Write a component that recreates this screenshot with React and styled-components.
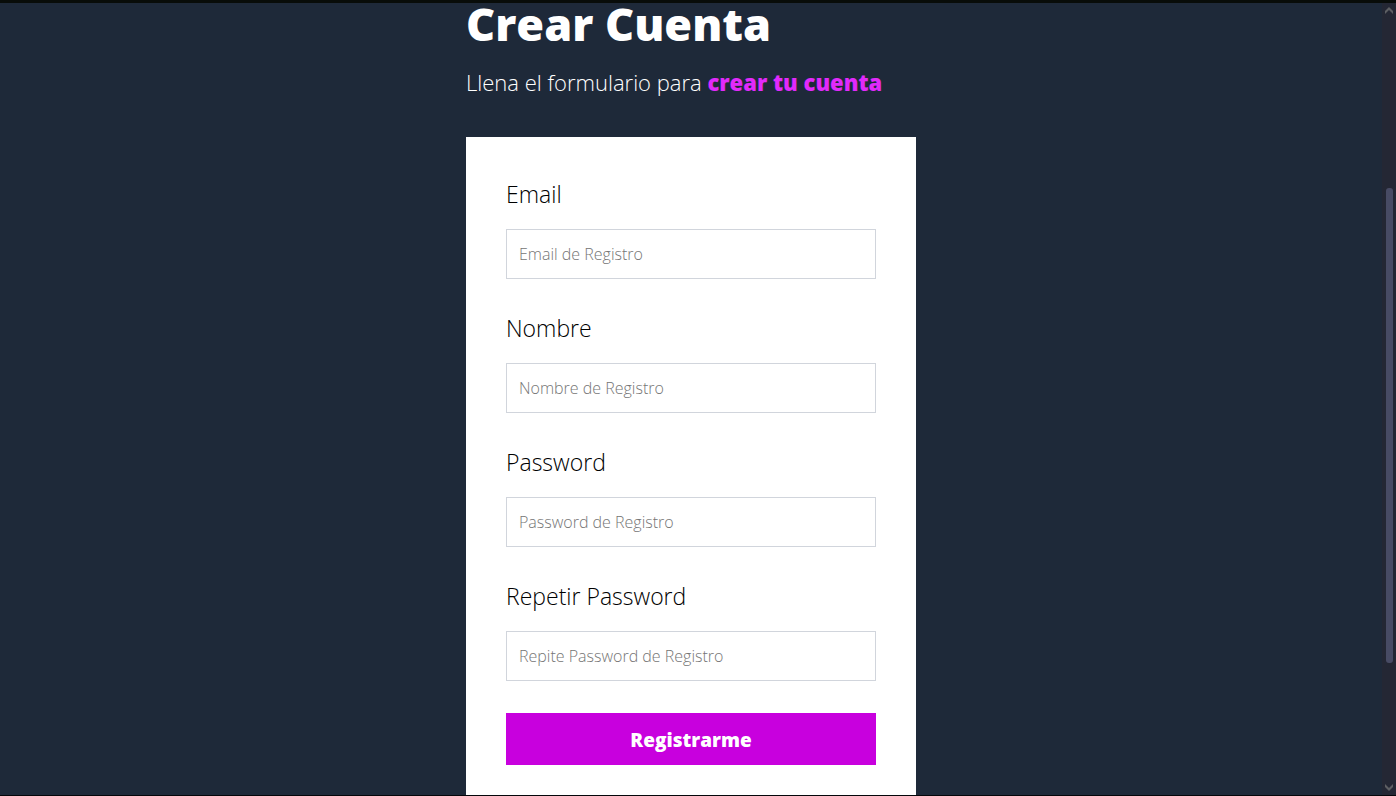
import React from "react";
import styled, { createGlobalStyle } from "styled-components";

const GlobalStyle = createGlobalStyle`
  *, *::before, *::after { box-sizing: border-box; }
  body {
    margin: 0;
    background: #1e2939;
    font-family: "Segoe UI", "Open Sans", "Noto Sans", sans-serif;
    font-weight: 300;
  }
  h1, p { margin: 0; }
`;

const Frame = styled.div`
  display: flex;
  height: 100vh;
  overflow: hidden;
  border-top: 3px solid #080c09;
  border-bottom: 1px solid #05060a;
`;

const Page = styled.main`
  flex: 1;
  min-width: 0;
  background: #1e2939;
`;

const Column = styled.div`
  max-width: 450px;
  margin: 0 auto;
`;

const Title = styled.h1`
  color: #fff;
  font-size: 45px;
  font-weight: 800;
  line-height: 42px;
`;

const Lead = styled.p`
  margin-top: 20px;
  color: #fff;
  font-size: 22px;
  line-height: 34px;
`;

const Accent = styled.span`
  color: #e12afb;
  font-weight: 800;
`;

const Form = styled.form`
  display: grid;
  gap: 32px;
  margin-top: 38px;
  padding: 40px;
  background: #fff;
`;

const Field = styled.div`
  display: grid;
  gap: 18px;
`;

const Label = styled.label`
  color: #000;
  font-size: 23px;
  font-weight: 350;
  line-height: 34px;
`;

const Input = styled.input`
  width: 100%;
  height: 50px;
  padding: 12px;
  border: 1px solid #d1d5dc;
  border-radius: 0;
  background: #fff;
  color: #000;
  font: inherit;
  font-size: 16px;
  outline: none;

  &::placeholder {
    color: #757575;
    opacity: 1;
  }
`;

const Submit = styled.button`
  padding: 13px 12px 11px;
  border: 0;
  background: #c800de;
  color: #fff;
  font: inherit;
  font-size: 19px;
  font-weight: 800;
  line-height: 28px;
  cursor: pointer;
`;

const ScrollTrack = styled.div`
  display: flex;
  flex-direction: column;
  align-items: center;
  flex: 0 0 14px;
  padding: 4px 0;
  background: #242734;
`;

const ThumbLane = styled.div`
  display: grid;
  flex: 1;
  grid-template-rows: 173fr 475fr 120fr;
`;

const Thumb = styled.div`
  grid-row: 2;
  width: 7px;
  border-radius: 3px;
  background: #484b64;
`;

const Arrow = ({ down }) => (
  <svg width="8" height="8" viewBox="0 0 8 8" aria-hidden="true">
    <path
      d={down ? "M0 1 L4 5 L8 1 V4 L4 8 L0 4 Z" : "M0 7 L4 3 L8 7 V4 L4 0 L0 4 Z"}
      fill="#5d5f63"
    />
  </svg>
);

const fields = [
  { id: "email", label: "Email", type: "email", placeholder: "Email de Registro" },
  { id: "name", label: "Nombre", type: "text", placeholder: "Nombre de Registro" },
  { id: "password", label: "Password", type: "password", placeholder: "Password de Registro" },
  {
    id: "password_confirmation",
    label: "Repetir Password",
    type: "password",
    placeholder: "Repite Password de Registro",
  },
];

export default function App() {
  return (
    <>
      <GlobalStyle />
      <Frame>
        <Page>
          <Column>
            <Title>Crear Cuenta</Title>
            <Lead>
              Llena el formulario para <Accent>crear tu cuenta</Accent>
            </Lead>
            <Form onSubmit={(event) => event.preventDefault()}>
              {fields.map(({ id, label, type, placeholder }) => (
                <Field key={id}>
                  <Label htmlFor={id}>{label}</Label>
                  <Input id={id} name={id} type={type} placeholder={placeholder} />
                </Field>
              ))}
              <Submit type="submit">Registrarme</Submit>
            </Form>
          </Column>
        </Page>
        <ScrollTrack aria-hidden="true">
          <Arrow />
          <ThumbLane>
            <Thumb />
          </ThumbLane>
          <Arrow down />
        </ScrollTrack>
      </Frame>
    </>
  );
}
